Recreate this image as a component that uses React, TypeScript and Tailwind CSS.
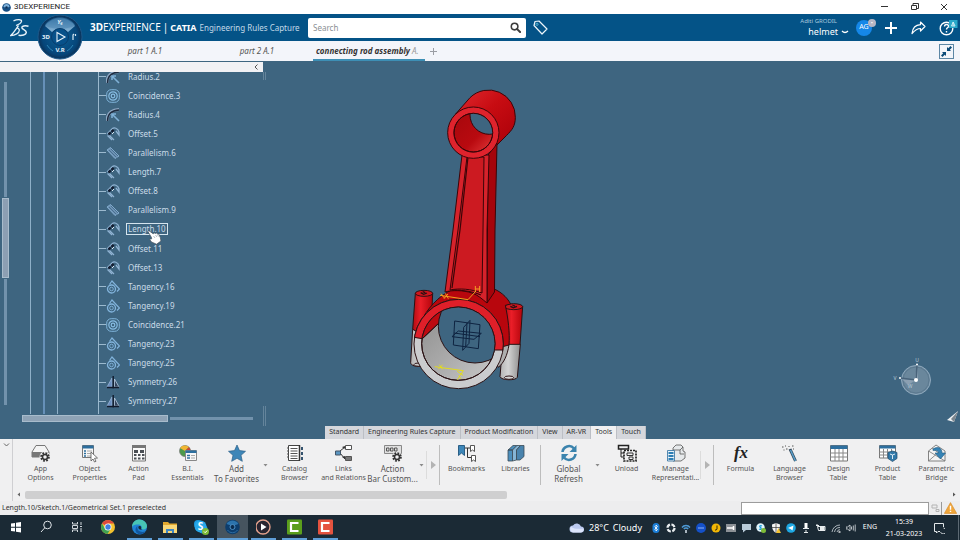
import type { ReactElement, ReactNode } from "react";
import clsx from "clsx";

type ConstraintKind = "radius" | "coincidence" | "offset" | "parallelism" | "tangency" | "symmetry";

type TreeNode = { label: string; kind: ConstraintKind; preselected?: boolean };

const TREE: TreeNode[] = [
  { label: "Radius.2", kind: "radius" },
  { label: "Coincidence.3", kind: "coincidence" },
  { label: "Radius.4", kind: "radius" },
  { label: "Offset.5", kind: "offset" },
  { label: "Parallelism.6", kind: "parallelism" },
  { label: "Length.7", kind: "offset" },
  { label: "Offset.8", kind: "offset" },
  { label: "Parallelism.9", kind: "parallelism" },
  { label: "Length.10", kind: "offset", preselected: true },
  { label: "Offset.11", kind: "offset" },
  { label: "Offset.13", kind: "offset" },
  { label: "Tangency.16", kind: "tangency" },
  { label: "Tangency.19", kind: "tangency" },
  { label: "Coincidence.21", kind: "coincidence" },
  { label: "Tangency.23", kind: "tangency" },
  { label: "Tangency.25", kind: "tangency" },
  { label: "Symmetry.26", kind: "symmetry" },
  { label: "Symmetry.27", kind: "symmetry" },
];

const SECTIONS = [
  "Standard",
  "Engineering Rules Capture",
  "Product Modification",
  "View",
  "AR-VR",
  "Tools",
  "Touch",
];

function ConstraintIcon({ kind }: { kind: ConstraintKind }): ReactElement {
  return (
    <svg viewBox="0 0 14 14" className="size-[14px] shrink-0" fill="none" aria-hidden="true">
      {kind === "radius" && (
        <>
          <path d="M1 13C1 6 5 2 13 1.500" stroke="#8fa9c4" strokeWidth="3" />
          <path d="M1.500 13C1.500 6.500 5.500 2.500 13 2" stroke="#1f2c40" strokeWidth="1.500" />
          <path d="M6 6l7 7M6 10V6h4" stroke="#7fb0d6" strokeWidth="1.600" />
        </>
      )}
      {kind === "coincidence" && (
        <>
          <rect x="0.700" y="0.700" width="12.600" height="12.600" rx="4.500" stroke="#7fb4da" />
          <circle cx="7" cy="7" r="4.200" stroke="#86bce2" strokeWidth="1.200" />
          <circle cx="7" cy="7" r="1.800" stroke="#86bce2" strokeWidth="1.200" />
        </>
      )}
      {kind === "offset" && (
        <>
          <path d="M1 7l5-5c2-2 6-1 7 3v3l-3-4" stroke="#8fb2d2" strokeWidth="1.300" />
          <path d="M3 8l5 5M1.500 8.500l4.500 4.500" stroke="#8fb2d2" strokeWidth="1.200" />
          <path d="M2.500 7.500l5.500-5" stroke="#141d30" strokeWidth="2.400" strokeDasharray="3 1" />
          <path d="M6 7l2-2" stroke="#dbe8f4" strokeWidth="1" />
        </>
      )}
      {kind === "parallelism" && (
        <>
          <path d="M1 4l8 8.500 4-2.500-8.500-8.500z" fill="#6d93b5" stroke="#86aed0" strokeWidth="0.900" />
          <path d="M3 4l7.500 7.500M5 3l7 7" stroke="#456b8b" strokeWidth="0.900" />
        </>
      )}
      {kind === "tangency" && (
        <>
          <circle cx="5.500" cy="9" r="4" stroke="#82b4dc" strokeWidth="1.300" />
          <circle cx="5.500" cy="9" r="1.800" stroke="#82b4dc" strokeWidth="0.900" />
          <path d="M3.500 4.500L6 1l7.500 8-2.500 2.500" stroke="#82b4dc" strokeWidth="1.200" />
        </>
      )}
      {kind === "symmetry" && (
        <>
          <path d="M6 3L1 12h5z" fill="#6b8fc0" stroke="#a2bbdd" strokeWidth="0.700" />
          <path d="M8.500 4l4.500 8H8.500z" fill="#35465f" stroke="#b9cbe0" strokeWidth="0.800" />
          <path d="M7.200 1v12.500M1 12.500h12" stroke="#111a2c" strokeWidth="1.400" />
        </>
      )}
    </svg>
  );
}

function TitleBar(): ReactElement {
  return (
    <div className="flex h-[14px] shrink-0 items-center bg-white pl-[2px] text-[#222]">
      <svg viewBox="0 0 10 10" className="size-[9px]" aria-hidden="true">
        <circle cx="5" cy="5" r="4.800" fill="#164e83" />
        <path d="M1.500 4a3.600 3.600 0 0 1 7 0L5 6z" fill="#7fb2db" />
        <circle cx="5" cy="5" r="1.400" fill="#0c3158" />
      </svg>
      <h1 className="ml-[3px] flex-1 font-[Roboto,sans-serif] text-[8px] leading-[10px]">
        3DEXPERIENCE
      </h1>
      <div className="flex gap-[16px] pr-[9px]">
        <button aria-label="Minimize">
          <svg viewBox="0 0 14 10" className="h-[10px] w-[14px]" stroke="#333" strokeWidth="1">
            <path d="M4 4.500h7" />
          </svg>
        </button>
        <button aria-label="Restore">
          <svg viewBox="0 0 14 10" className="h-[10px] w-[14px]" fill="none" stroke="#333">
            <path d="M4.500 3.500h5v4h-5zM6 3V1.500h5.500v5H10" />
          </svg>
        </button>
        <button aria-label="Close">
          <svg viewBox="0 0 14 10" className="h-[10px] w-[14px]" fill="none" stroke="#333">
            <path d="M4 2l6 6M10 2l-6 6" />
          </svg>
        </button>
      </div>
    </div>
  );
}

function Compass(): ReactElement {
  return (
    <button className="absolute left-[37px] top-0 z-10" aria-label="Compass">
      <svg viewBox="0 0 46 46" className="size-[46px]">
        <defs>
          <linearGradient id="top" x1="0" y1="0" x2="0" y2="1">
            <stop offset="0" stopColor="#2c6b9c" />
            <stop offset="1" stopColor="#8db9da" />
          </linearGradient>
          <radialGradient id="ball">
            <stop offset="0" stopColor="#0d6096" />
            <stop offset="0.800" stopColor="#06467a" />
            <stop offset="1" stopColor="#0b3157" />
          </radialGradient>
        </defs>
        <circle cx="23" cy="23" r="22" fill="url(#ball)" stroke="#1d5a8c" />
        <path d="M8 12A18.500 18.500 0 0 1 38 12L31 18A11 11 0 0 0 15 18z" fill="url(#top)" />
        <path d="M8 11C14 1 32 1 38 11 32 16 14 16 8 11z" fill="#4c87b4" opacity="0.550" />
        <path d="M10 31a16 16 0 0 0 6 6M36 31a16 16 0 0 1-6 6" stroke="#2d84b5" fill="none" />
        <circle cx="23" cy="23" r="8.500" fill="#07518a" stroke="#0a3e6d" />
        <path d="M20 18.500v9l8-4.500z" fill="none" stroke="#e8f2fa" strokeWidth="1.100" />
        <path d="M36 26v-5l1-1M38.500 22v-2" stroke="#d6e6f2" fill="none" strokeWidth="1.200" />
        <g
          fill="#e8f2fa"
          fontFamily="Noto Sans, sans-serif"
          fontSize="6"
          fontWeight="700"
          textAnchor="middle"
        >
          <text x="9" y="25">3D</text>
          <text x="23" y="10" fontStyle="italic">Y₆</text>
          <text x="23" y="38">V.R</text>
        </g>
      </svg>
    </button>
  );
}

function Header(): ReactElement {
  return (
    <header className="relative flex h-[27px] shrink-0 items-center bg-[#045387] text-white">
      <svg viewBox="0 0 20 18" className="ml-[10px] h-[18px] w-[20px]" fill="none" stroke="#e6f1f8">
        <path d="M3.500 1.800C7 .300 12 .200 11.500 2.300 11 4.300 8.500 5.500 6 6.500" strokeWidth="1.300" />
        <path
          d="M8.500 6.500C6 10 4 13.500 .800 16.500 5 16.500 9.500 14 9.300 11 9.200 9.500 8.300 9 6.500 8.800"
          strokeWidth="1.300"
        />
        <path
          d="M18.500 7.200C15 6.200 11.500 7 12 9c.500 1.600 4.500 2 4.300 4.500C16.100 16 12 16.800 8.500 16.300"
          strokeWidth="1.500"
        />
      </svg>
      <Compass />
      <p className="ml-[60px] flex w-[218px] items-baseline whitespace-nowrap font-[Noto_Sans,sans-serif] leading-4">
        <span className="text-[10px]">
          <b>3D</b>EXPERIENCE
        </span>
        <span className="mx-[2px] text-[10px]">|</span>
        <b className="text-[9px]">CATIA</b>
        <span className="ml-[3px] text-[8px] text-[#c3d9e8]">Engineering Rules Capture</span>
      </p>
      <form className="flex h-[20px] w-[218px] items-center rounded-xs bg-white pl-[5px] pr-[5px]">
        <input
          aria-label="Search"
          placeholder="Search"
          className="min-w-0 flex-1 font-[Noto_Sans,sans-serif] text-[8px] leading-3 text-gray-800 outline-none placeholder:text-[#8b8f94]"
        />
        <button type="button" aria-label="Run search">
          <svg viewBox="0 0 12 12" className="size-[11px]" fill="none" stroke="#3c3c3c">
            <circle cx="5" cy="5" r="3.600" strokeWidth="1.700" />
            <path d="M7.800 7.800L11 11" strokeWidth="2.200" strokeLinecap="round" />
          </svg>
        </button>
      </form>
      <button aria-label="Tags" className="ml-[7px]">
        <svg viewBox="0 0 15 15" className="size-[15px]" fill="none" stroke="#eef6fb">
          <path d="M1 5.500L2 1.500 6 1l8 8-5 5z" strokeWidth="1.200" strokeLinejoin="round" />
          <circle cx="4" cy="4.300" r="1.100" stroke="#59b7d6" />
        </svg>
      </button>
      <div className="flex-1" />
      <div className="mr-[7px] font-[Noto_Sans,sans-serif]">
        <p className="text-[6px] leading-[8px] text-[#a9c8de]">Aditi GRODIL</p>
        <button className="ml-2 flex items-center gap-[3px] text-[9px] leading-[14px]">
          helmet
          <svg viewBox="0 0 8 6" className="h-[6px] w-[8px]" fill="none" stroke="#fff">
            <path d="M1 2q3 3 6 0" strokeWidth="1.300" />
          </svg>
        </button>
      </div>
      <button className="relative flex size-4 items-center justify-center rounded-full bg-[#1587e8] font-[Noto_Sans,sans-serif] text-[7px]">
        AG
        <span className="absolute -right-1 -top-px flex size-2 items-center justify-center rounded-full bg-[#b5b6c4] text-[6px] leading-none">
          •
        </span>
      </button>
      <button aria-label="Add" className="ml-[12px]">
        <svg viewBox="0 0 14 14" className="size-[14px]" stroke="#fff" strokeWidth="2">
          <path d="M7 1v12M1 7h12" />
        </svg>
      </button>
      <button aria-label="Share" className="ml-[13px]">
        <svg viewBox="0 0 15 14" className="h-[14px] w-[15px]" fill="none" stroke="#fff">
          <path
            d="M9.500 1L14 5.500 9.500 10V7.500C6 7.500 4 9 1 12.500 1.500 7.500 4.500 4 9.500 3.700z"
            strokeWidth="1.200"
            strokeLinejoin="round"
          />
        </svg>
      </button>
      <button aria-label="Help" className="relative ml-[13px] mr-[2px]">
        <svg viewBox="0 0 19 16" className="h-4 w-[19px]" fill="none">
          <circle cx="7.500" cy="8.500" r="6.300" stroke="#fff" strokeWidth="1.400" />
          <path
            d="M5.500 6.500c0-3 4.500-2.500 4 0-.300 1.300-2 1.500-2 3M7.500 11v1.500"
            stroke="#fff"
            strokeWidth="1.400"
          />
          <rect x="10" y="0" width="8.500" height="8" fill="#2aa9c9" />
          <path d="M14.200 2v4M12.500 6l1.700-4 1.800 4z" stroke="#d8f2f8" strokeWidth="0.900" />
        </svg>
      </button>
    </header>
  );
}

function DocumentTabs(): ReactElement {
  return (
    <nav className="flex h-[20px] shrink-0 items-stretch bg-[#f3f5fa] pl-[89px] font-[Noto_Sans,sans-serif] text-[8px] italic text-[#555]">
      <button className="w-[112px]">part 1 A.1</button>
      <button className="w-[112px]">part 2 A.1</button>
      <button className="w-[112px] overflow-hidden whitespace-nowrap border-b-2 border-[#3d8fb5] pt-[2px] text-left font-bold text-[#333]">
        <span className="ml-[3px]">connecting rod assembly</span>{" "}
        <span className="font-normal text-[#999]">A.</span>
      </button>
      <button aria-label="New tab" className="ml-[5px]">
        <svg viewBox="0 0 7 7" className="size-[7px]" stroke="#9a9da3">
          <path d="M3.500 0v7M0 3.500h7" />
        </svg>
      </button>
      <div className="flex-1" />
      <button
        aria-label="Exit full screen"
        className="mr-[6px] flex size-[15px] items-center justify-center self-center border border-[#5d87a5]"
      >
        <svg viewBox="0 0 11 11" className="size-[11px]" fill="#0c4b78">
          <path d="M6 5V1l1.300 1.200L9.500 0 11 1.500 8.800 3.700 10 5zM5 6v4L3.700 8.800 1.500 11 0 9.500l2.200-2.200L1 6z" />
        </svg>
      </button>
    </nav>
  );
}

function HandCursor(): ReactElement {
  return (
    <svg viewBox="0 0 15 15" className="absolute left-[21px] top-[7px] z-10 size-[15px]" aria-hidden="true">
      <path
        d="M.800 1.300C2 .200 3 1.500 6.200 3.800l1-.900 1.200.6 1.200-.400 1 .9 1.200.1 1.500 3.500L14 11l-4.500 3.200L4.500 12 2.500 9.200l2.200-.400L4.500 7.500z"
        fill="#fff"
        stroke="#43505c"
        strokeWidth="0.700"
      />
      <path d="M6.500 6l1.500 2M8.500 5l1.500 2M10.500 4.800l1 1.700" stroke="#8894a0" strokeWidth="0.600" />
    </svg>
  );
}

function FeatureTree(): ReactElement {
  return (
    <aside className="flex w-[266px] shrink-0 flex-col">
      <div className="mt-px flex h-[10px] shrink-0">
        <div className="flex w-[263px] items-center justify-end bg-[#f1f1f4] pr-1">
          <button aria-label="Collapse tree">
            <svg viewBox="0 0 6 8" className="h-2 w-[6px]" fill="none" stroke="#555">
              <path d="M4.500 1.500L2 4l2.500 2.500" />
            </svg>
          </button>
        </div>
      </div>
      <div className="flex min-h-0 flex-1">
        <div className="flex w-[30px] shrink-0 flex-col items-center pb-[9px] pr-[20px] pt-[10px]">
          <div className="w-[3px] flex-[115] bg-[#7292ac]" />
          <div className="my-px w-[7px] flex-[78] border border-[#a8bccc] bg-[#8c9fb3]" />
          <div className="w-[3px] flex-[126] bg-[#7292ac]" />
        </div>
        <div className="w-[13px] shrink-0 border-l border-[#8fb0c8]" />
        <div className="w-[14px] shrink-0 border-l-2 border-[#6690b8]" />
        <div className="w-[41px] shrink-0 border-l border-[#8fb0c8]" />
        <div className="min-w-0 flex-1 overflow-hidden border-l border-[#9bb9ce]">
          <ul className="-mt-[5px] grid h-[calc(100%+2px)] auto-rows-fr">
            {TREE.map((node) => (
              <li key={node.label} className="flex min-h-0 items-center">
                <span className="h-px w-[7px] bg-[#9bb9ce]" />
                <ConstraintIcon kind={node.kind} />
                <div className="relative ml-[6px] flex">
                  <button
                    className={clsx(
                      "border px-px font-[Noto_Sans,sans-serif] text-[8px] leading-[10px] text-[#cbdce8]",
                      node.preselected ? "border-[#d5e4ee]" : "border-transparent",
                    )}
                  >
                    {node.label}
                  </button>
                  {node.preselected ? <HandCursor /> : null}
                </div>
              </li>
            ))}
          </ul>
        </div>
        <div className="flex w-[3px] shrink-0 flex-col justify-between">
          <span className="h-2 border-x border-[#64849b]" />
          <span className="h-2 border-x border-[#64849b]" />
        </div>
      </div>
      <div className="flex h-[12px] shrink-0 pl-[22px]">
        <div className="mt-px h-[7px] w-[146px] border border-[#a8bccc] bg-[#8fa3b6]" />
        <div className="ml-[2px] mt-[3px] h-[3px] w-[83px] bg-[#7292ac]" />
        <span className="ml-auto w-[3px] border-x border-[#64849b]" />
      </div>
    </aside>
  );
}

// Connecting rod, view compass and resize corner, in window coordinates.
function ModelView(): ReactElement {
  return (
    <div className="relative min-w-0 flex-1">
      <svg viewBox="266 61 694 365" className="absolute inset-0 size-full" role="img" aria-label="Connecting rod">
        <defs>
          <linearGradient id="barrel" x1="0" y1="0" x2="1" y2="1">
            <stop offset="0" stopColor="#df2a30" />
            <stop offset="0.450" stopColor="#c80c12" />
            <stop offset="1" stopColor="#a90009" />
          </linearGradient>
          <linearGradient id="bore" x1="0" y1="0" x2="1" y2="1">
            <stop offset="0" stopColor="#a6070c" />
            <stop offset="0.600" stopColor="#b90a10" />
            <stop offset="1" stopColor="#e23a3a" />
          </linearGradient>
          <linearGradient id="boltRed" x1="0" y1="0" x2="1" y2="0">
            <stop offset="0" stopColor="#b00c12" />
            <stop offset="0.400" stopColor="#ea1e28" />
            <stop offset="1" stopColor="#b3040b" />
          </linearGradient>
          <linearGradient id="boltGrey" x1="0" y1="0" x2="1" y2="0">
            <stop offset="0" stopColor="#b4b4b4" />
            <stop offset="0.400" stopColor="#d4d4d4" />
            <stop offset="1" stopColor="#8f8f8f" />
          </linearGradient>
          <linearGradient id="cap" x1="0" y1="0" x2="1" y2="1">
            <stop offset="0" stopColor="#8d8d8d" />
            <stop offset="0.500" stopColor="#a9a9a9" />
            <stop offset="1" stopColor="#c9c9c9" />
          </linearGradient>
          <clipPath id="smallBore">
            <circle cx="250" cy="158" r="58" />
          </clipPath>
          <clipPath id="bigBore">
            <circle cx="205" cy="341" r="110" />
          </clipPath>
          <clipPath id="upperHalf">
            <path d="M40 160H360V361H315L97 326 40 319z" />
          </clipPath>
        </defs>

        {/* small end, back barrel */}
        <g transform="translate(390 80) scale(0.33333)" stroke="#3a0508" strokeWidth="3">
          <path
            d="M196 103L240 53A80 80 0 0 1 376 112C376 138 366 150 350 166L318 198z"
            fill="url(#barrel)"
          />
        </g>

        {/* big end, bolts and ring */}
        <g transform="translate(390 230) scale(0.33333)" stroke="#2a1113" strokeWidth="3">
          <path d="M68 298L62 398C62 406 78 412 98 408L128 300z" fill="url(#boltGrey)" />
          <path d="M76 190L68 298 90 310 124 280 128 190z" fill="url(#boltRed)" />
          <ellipse cx="102" cy="190" rx="26" ry="9" fill="#cf151c" />
          <path d="M92 188l9 5 10-4M98 185l8 3" fill="none" strokeWidth="4" />
          <ellipse cx="86" cy="404" rx="14" ry="5" fill="#c9c9c9" />

          <path d="M344 230L342 345 390 345 398 230z" fill="url(#boltRed)" />
          <path d="M338 343L330 440C334 452 378 452 382 442L391 343z" fill="url(#boltGrey)" />
          <ellipse cx="371" cy="230" rx="27" ry="9" fill="#cf151c" />
          <path d="M361 229l9 4 11-4M367 225l8 3" fill="none" strokeWidth="4" />
          <ellipse cx="357" cy="443" rx="14" ry="5" fill="#d5d5d5" />

          <path
            d="M100 262C120 225 160 185 205 172L300 172C330 182 350 200 362 222L346 226C354 262 360 310 357 345L340 362 206 342z"
            fill="#b8060d"
          />
          <path d="M357 345C352 376 342 398 325 412L310 380 338 350z" fill="#aeaeae" />
          <circle cx="206" cy="342" r="134" fill="#cbccce" />
          <circle cx="206" cy="342" r="134" fill="#df1f29" clipPath="url(#upperHalf)" />
          <path d="M72 322L97 326M315 360L340 360" />
          <circle cx="205" cy="341" r="110" fill="url(#cap)" />
          <g clipPath="url(#bigBore)">
            <path d="M90 327L97 326 146 280 200 225 90 225z" fill="#bc0910" />
            <path d="M146 280L240 225H320V360H310z" fill="#bc0910" />
            <circle cx="255" cy="289" r="110" fill="#3e6580" />
            <path d="M97 326L146 280" />
          </g>
          <circle cx="205" cy="341" r="110" fill="none" />
        </g>

        {/* shank */}
        <g stroke="#3a0508" strokeWidth="1">
          <path d="M488 155L497 143 495 230 494.500 292 487 303z" fill="#a5040b" />
          <path
            d="M462 155L453 230 445 292C452 290 463 290 472 293 478 295 482 299 487 303L487 230 489 155z"
            fill="#d6222b"
          />
          <path d="M467 157L458 230 450 290C460 288 471 289 482 293L483 230 484 157z" fill="#cc1a21" />
          <path d="M468 157L460 230 452 288" fill="none" strokeWidth="1.200" />
          <path d="M452 290C460 290 472 291 481 295" fill="none" strokeWidth="1.200" />
        </g>

        {/* small end, front ring */}
        <g transform="translate(390 80) scale(0.33333)" stroke="#3a0508" strokeWidth="3">
          <circle cx="250" cy="158" r="77" fill="#df232d" />
          <circle cx="250" cy="158" r="58" fill="url(#bore)" />
          <circle cx="298" cy="105" r="58" fill="#3e6580" clipPath="url(#smallBore)" />
          <circle cx="250" cy="158" r="58" fill="none" />
        </g>

        {/* sketch planes and axes */}
        <g transform="translate(390 230) scale(0.33333)" fill="none" strokeWidth="3">
          <path
            d="M194 273L270 284 265 356 190 345zM240 271L221 292 218 361 237 340zM186 320L205 303 274 310 252 328zM192 309L270 320M231 279L227 350"
            stroke="#0e2340"
          />
          <path d="M150 196L234 209 258 183M166 190L175 206M162 206L174 192M153 191L164 205" stroke="#f0a21e" />
          <path d="M256 168V186M269 168V186M256 177H269" stroke="#f3a024" />
          <path d="M134 410L220 422 202 449M148 404L157 418M145 417L158 405M202 424L219 436M206 436L213 446" stroke="#e3dc1c" />
        </g>

        {/* view compass */}
        <circle cx="916" cy="380" r="14.500" fill="#6a879c" stroke="#8fa9bd" />
        <circle cx="916" cy="380" r="13" fill="none" stroke="#54738a" strokeWidth="0.700" />
        <path d="M916 380L902 379 908 385zM914.500 380L917 366 918 380z" fill="#8ba0b2" />
        <path d="M900 378L916 380 917 365" fill="none" stroke="#48637a" strokeWidth="1.500" />
        <g fill="#fff">
          <circle cx="916" cy="380" r="2" />
          <circle cx="900" cy="378" r="1" />
          <circle cx="917" cy="364.500" r="1" />
        </g>
        <g fill="#b9cad8" fontFamily="Noto Sans, sans-serif" fontSize="5" textAnchor="middle">
          <text x="917" y="362">U</text>
          <text x="895" y="380">V</text>
          <text x="910" y="388">W</text>
        </g>
        <path d="M947 420L958 411 954 422z" fill="#eef1f3" />
        <path d="M951 419L958 411 954 422z" fill="#7b858d" />
      </svg>
    </div>
  );
}

function SectionBar(): ReactElement {
  return (
    <div className="flex h-[13px] shrink-0 justify-center bg-[#3e6580] pl-[11px] font-[Noto_Sans,sans-serif] text-[7px] text-[#333]">
      {SECTIONS.map((section) => (
        <button
          key={section}
          className={clsx(
            "whitespace-nowrap border-r border-[#bcbfc5] px-1",
            section === "Tools" ? "bg-[#f0f0f1]" : "bg-[#d5d7dc]",
          )}
        >
          {section}
        </button>
      ))}
    </div>
  );
}

type ToolProps = { lines: string[]; large?: boolean; children: ReactNode };

function Tool({ lines, large = false, children }: ToolProps): ReactElement {
  return (
    <button className="flex w-[49px] shrink-0 flex-col items-center pt-[5px]">
      <svg viewBox="0 0 20 18" className="h-[18px] w-[20px] overflow-visible" fill="none" aria-hidden="true">
        {children}
      </svg>
      <span
        className={clsx(
          "mt-[2px] text-center whitespace-nowrap text-[#555]",
          large ? "text-[8px] leading-[10px]" : "text-[7px] leading-[9px]",
        )}
      >
        {lines.map((line) => (
          <span key={line} className="block">
            {line}
          </span>
        ))}
      </span>
    </button>
  );
}

function DropArrow(): ReactElement {
  return (
    <button aria-label="More" className="w-[9px] shrink-0">
      <svg viewBox="0 0 9 6" className="h-[6px] w-[9px]" fill="#8a8a8a">
        <path d="M2.500 2h4l-2 2.500z" />
      </svg>
    </button>
  );
}

function NextGroup(): ReactElement {
  return (
    <div className="mr-[2px] mt-[6px] flex h-[40px] w-[14px] shrink-0 items-center border-r border-[#bdbdbd]">
      <button aria-label="Expand group" className="flex h-7 items-center border-l border-[#dcdcdc] pl-[4px]">
        <svg viewBox="0 0 6 8" className="h-2 w-[6px]" fill="#b4b4b4">
          <path d="M0 0l5 4-5 4z" />
        </svg>
      </button>
    </div>
  );
}

function Gear({ x, y }: { x: number; y: number }): ReactElement {
  return (
    <g transform={`translate(${x} ${y})`} stroke="#333">
      <circle r="3.800" strokeWidth="2" strokeDasharray="1.700 1.280" />
      <circle r="2.500" strokeWidth="1.500" />
    </g>
  );
}

function Toolbar(): ReactElement {
  return (
    <section className="flex h-[62px] shrink-0 overflow-hidden bg-[#f0f0f1] font-[Noto_Sans,sans-serif]">
      <div className="w-[13px] shrink-0 border-r border-[#cfcfd2] pl-[3px] pt-[3px]">
        <button aria-label="Hide action bar" className="block">
          <svg viewBox="0 0 7 6" className="h-[6px] w-[7px]" fill="none" stroke="#666">
            <path d="M1 1.500l2.500 2.500L6 1.500" />
          </svg>
        </button>
      </div>
      <div className="min-w-0 flex-1">
        <div className="flex h-[51px] overflow-hidden pl-[3px]">
          <Tool lines={["App", "Options"]}>
            <path d="M1 8L5 1.500h9L18 8v5H1z" fill="#f4f4f4" stroke="#777" />
            <path d="M1 8h17v5H1z" fill="#777" />
            <circle cx="14" cy="13" r="5.500" fill="#f0f0f1" />
            <Gear x={14} y={13} />
          </Tool>
          <Tool lines={["Object", "Properties"]}>
            <path d="M2.500 1.500h11v12h-11z" fill="#f7f7f7" stroke="#777" />
            <path d="M2.500 1.500h11v3h-11z" fill="#2d6f9f" />
            <path d="M4 7h2M4 9.500h2M4 12h2" stroke="#2d6f9f" strokeWidth="1.500" />
            <path d="M7 7h5M7 9.500h5M7 12h4" stroke="#aaa" />
            <path d="M11 8l6.500 6-3 .3 1.500 3-1.500.7-1.500-3-2 2z" fill="#fff" stroke="#555" strokeWidth="0.800" />
          </Tool>
          <Tool lines={["Action", "Pad"]}>
            <path d="M3.500 1.500h13v15.500h-13z" fill="#fafafa" stroke="#777" />
            <path d="M3 1h14v3H3z" fill="#777" />
            <path d="M5 6h4v3H5zM11 6h4v3h-4zM5 10h2.500v2H5zM9 10h2.500v2H9zM13 10h2.500v2H13zM5 13.500h2.500v2H5zM9 13.500h2.500v2H9zM13 13.500h2.500v2H13z" fill="#4a4f55" />
          </Tool>
          <Tool lines={["B.I.", "Essentials"]}>
            <circle cx="7" cy="7" r="5.500" fill="#4c9a4a" stroke="#777" strokeWidth="0.700" />
            <path d="M7 7L2 4A6 6 0 0 1 11 3z" fill="#f2b632" />
            <path d="M7 7l4-4 2 4z" fill="#ce4636" />
            <path d="M7.500 6.500h11v10h-11z" fill="#f7f7f7" stroke="#888" />
            <path d="M7.500 6.500h11v2.500h-11z" fill="#2d6f9f" />
            <path d="M9 11.500h3M9 14h3" stroke="#2d6f9f" strokeWidth="1.500" />
            <path d="M13 11.500h4M13 14h4" stroke="#aaa" />
          </Tool>
          <Tool lines={["Add", "To Favorites"]} large>
            <path
              d="M10 1l2.500 5.600 6 .700-4.500 4 1.300 6L10 14.300 4.700 17.300l1.300-6-4.500-4 6-.700z"
              fill="#3d86b8"
              stroke="#2b5f86"
              strokeWidth="0.700"
            />
          </Tool>
          <DropArrow />
          <Tool lines={["Catalog", "Browser"]}>
            <path d="M3.500 1.500h11v15h-11z" fill="#fff" stroke="#444" />
            <path d="M14.500 1v16" stroke="#333" strokeWidth="1.500" />
            <path d="M5.500 4.500h7M5.500 7h7M5.500 9.500h7M5.500 12h7M5.500 14.500h7" stroke="#555" />
            <path d="M2 4h2M2 7h2M2 10h2M2 13h2" stroke="#555" />
            <path d="M16 3h2v3h-2zM16 8h2v3h-2zM16 13h2v3h-2z" fill="#34536e" />
          </Tool>
          <Tool lines={["Links", "and Relations"]}>
            <path d="M6 7l5-4h7M6 9l5 6h7" stroke="#333" strokeWidth="1" />
            <path d="M1.500 7h5v4h-5z" fill="#5b96c2" stroke="#456" />
            <path d="M11.500 1.500h6v4h-6z" fill="#fff" stroke="#555" />
            <path d="M11.500 12.500h6v4h-6z" fill="#777" stroke="#555" />
            <path d="M8 3l3-1-.500 3zM8 13l3 2V12z" fill="#333" />
          </Tool>
          <Tool lines={["Action", "Bar Custom..."]} large>
            <path d="M1.500 1.500h17v8h-17z" fill="#e0e0e0" stroke="#888" />
            <path d="M3.500 4h2.500v3H3.500zM7.500 4H10v3H7.500zM11.500 4H14v3h-2.500z" stroke="#555" />
            <circle cx="14" cy="13" r="5" fill="#f0f0f1" />
            <Gear x={14} y={13} />
          </Tool>
          <DropArrow />
          <NextGroup />
          <Tool lines={["Bookmarks"]}>
            <path d="M1.500 1.500h6v10l-3-2.500-3 2.500z" fill="#3d86b8" stroke="#2b5f86" />
            <path d="M8 4h5M10.500 4v9.500h4" stroke="#333" />
            <path d="M13.500 1.500h4v6l-2-1.500-2 1.500zM14.500 11.500h4v6l-2-1.500-2 1.500z" fill="#fff" stroke="#555" />
          </Tool>
          <Tool lines={["Libraries"]}>
            <path d="M2 6l5-4.500h4L6.500 6zM2 6h4.500v11H2z" fill="#4d8fbc" stroke="#3b4a56" strokeWidth="0.800" />
            <path d="M6.500 6L11 1.500h3.500L10.500 6v10l-4 1z" fill="#86b5d5" stroke="#3b4a56" strokeWidth="0.800" />
            <path d="M10.500 6L14.500 1.500H18v11L14 16h-3.500z" fill="#4983ad" stroke="#3b4a56" strokeWidth="0.800" />
          </Tool>
          <div className="mt-[6px] h-[40px] w-[4px] shrink-0 border-l border-[#bdbdbd]" />
          <Tool lines={["Global", "Refresh"]} large>
            <path d="M3.500 8A6.500 6.500 0 0 1 15 4.500M16.500 10A6.500 6.500 0 0 1 5 13.500" stroke="#3b83ad" strokeWidth="2.600" />
            <path d="M17.500 1v7h-7zM2.500 17v-7h7z" fill="#3b83ad" />
          </Tool>
          <DropArrow />
          <Tool lines={["Unload"]}>
            <path d="M1.500 1.500h10v3.500h-10z" stroke="#222" strokeWidth="1.500" />
            <path d="M4 5v8h3M4 9h3" stroke="#222" />
            <path d="M7 6.500h12V17H7z" stroke="#222" strokeWidth="1.700" strokeDasharray="2 1" />
            <path d="M10 9h6v2.500h-6zM12 13h4v2.500h-4z" stroke="#333" />
          </Tool>
          <Tool lines={["Manage", "Representati..."]}>
            <path d="M7 6V4l3-3h5l2 2v4l2 1v6l-4 3H7z" fill="#e6e9eb" stroke="#555" strokeWidth="0.800" />
            <path d="M7 6h7v4h4M14 6l3-3" stroke="#555" strokeWidth="0.800" />
            <path d="M1.500 6.500h7v10.500h-7z" fill="#e8f1f7" stroke="#2d6f9f" strokeWidth="0.800" />
            <path d="M2.500 9h5M2.500 12h5M2.500 15h5" stroke="#2d7fb5" strokeWidth="2" />
          </Tool>
          <NextGroup />
          <Tool lines={["Formula"]}>
            <text x="10" y="14" textAnchor="middle" fill="#222" fontSize="17" fontWeight="700" fontStyle="italic" fontFamily="Liberation Serif, serif">
              fx
            </text>
          </Tool>
          <Tool lines={["Language", "Browser"]}>
            <path d="M10 5l5.500 12" stroke="#33485a" strokeWidth="3" />
            <path d="M10.500 6l5 11" stroke="#5aa0cc" strokeWidth="1.500" />
            <path d="M2 3h1.500M5 2h1M6 5h1.500M8.500 2.500h1M12 2h1.500M3.500 6h1M13 5h1" stroke="#555" strokeWidth="1.200" />
          </Tool>
          <Tool lines={["Design", "Table"]}>
            <path d="M1.500 1.500h17V17h-17z" fill="#fff" stroke="#777" />
            <path d="M1.500 1.500h17v3.500h-17z" fill="#2d6f9f" />
            <path d="M1.500 9h17M1.500 13h17M6 5v12M10 5v12M14 5v12" stroke="#888" />
          </Tool>
          <Tool lines={["Product", "Table"]}>
            <path d="M1.500 1.500h16V14h-16z" fill="#fff" stroke="#777" />
            <path d="M1.500 1.500h16v3h-16z" fill="#2d6f9f" />
            <path d="M1.500 8h16M1.500 11h16M5.500 5v9M9.500 5v9M13.500 5v9" stroke="#888" />
            <path d="M10 8.500l4.500-1.500 4.500 1.500v6L14.500 17.500 10 14.500z" fill="#3179a9" stroke="#1f4c6d" strokeWidth="0.700" />
            <path d="M12 10l2.500 1 2.500-1M14.500 11v4" stroke="#dcebf5" />
          </Tool>
          <Tool lines={["Parametric", "Bridge"]}>
            <path d="M1.500 7L9 1l9 6v10h-16.500z" fill="#f4f4f4" stroke="#666" strokeWidth="0.800" />
            <path d="M1.500 7l16.500 10M1.500 17L9 10.500M5 4l8 6" stroke="#777" strokeWidth="0.800" />
            <path d="M6 5c5-3 9-1 9 4h3.500L13.500 15 8 9h3.500c0-2-2-3-5.500-2.500z" fill="#3583b5" stroke="#215a80" strokeWidth="0.600" />
          </Tool>
        </div>
        <div className="flex h-[9px] items-center">
          <button aria-label="Scroll left" className="w-[12px] pl-[4px]">
            <svg viewBox="0 0 4 5" className="h-[5px] w-[4px]" fill="#666">
              <path d="M3 .500v4L.500 2.500z" />
            </svg>
          </button>
          <div className="min-w-0 flex-1">
            <div className="h-2 w-[52%] rounded-xs bg-[#cfcfd0]" />
          </div>
          <button aria-label="Scroll right" className="pr-[4px]">
            <svg viewBox="0 0 4 5" className="h-[5px] w-[4px]" fill="#555">
              <path d="M1 .500v4L3.500 2.500z" />
            </svg>
          </button>
        </div>
      </div>
    </section>
  );
}

function StatusBar(): ReactElement {
  return (
    <div className="flex h-[14px] shrink-0 items-center bg-[#ededee] pl-[2px] font-[Noto_Sans,sans-serif] text-[7px] text-[#333]">
      <p className="flex-1 whitespace-nowrap">Length.10/Sketch.1/Geometrical Set.1 preselected</p>
      <input aria-label="Power input" className="h-[13px] w-[188px] border border-[#9c9c9c] bg-white px-1 outline-none" />
      <button aria-label="Command history" className="ml-px flex h-[13px] w-[12px] items-center justify-center border-r border-[#999]">
        <svg viewBox="0 0 9 9" className="size-[9px]" fill="none" stroke="#b3b3b3">
          <path d="M1 1h5v3H1zM5 5.500h3v2H5z" />
        </svg>
      </button>
      <button aria-label="Warnings" className="ml-[2px] mr-[3px]">
        <svg viewBox="0 0 12 11" className="h-[12px] w-[13px]">
          <path d="M6 .500L11.700 10.500H.300z" fill="#efa63b" stroke="#d98b28" strokeWidth="0.600" />
          <path d="M6 3.500v3.500M6 8v1.300" stroke="#fff" strokeWidth="1.300" />
        </svg>
      </button>
    </div>
  );
}

type TaskButtonProps = { label: string; running?: boolean; active?: boolean; children: ReactNode };

function TaskButton({ label, running = false, active = false, children }: TaskButtonProps): ReactElement {
  return (
    <button
      aria-label={label}
      className={clsx("flex w-[31px] shrink-0 flex-col items-center", active && "bg-[#46545f]")}
    >
      <svg viewBox="0 0 16 16" className="mt-[4px] size-4" fill="none" aria-hidden="true">
        {children}
      </svg>
      <span
        className={clsx(
          "mt-auto h-[2px]",
          active ? "w-full" : "w-[25px]",
          running ? "bg-[#5f9fd8]" : "bg-transparent",
        )}
      />
    </button>
  );
}

function TrayIcon({ label, children }: { label: string; children: ReactNode }): ReactElement {
  return (
    <button aria-label={label} className="flex w-[15px] items-center justify-center">
      <svg viewBox="0 0 10 10" className="size-[10px]" fill="none" aria-hidden="true">
        {children}
      </svg>
    </button>
  );
}

function Taskbar(): ReactElement {
  return (
    <footer className="flex h-[25px] shrink-0 items-stretch bg-[#1b2a35] font-[Noto_Sans,sans-serif] text-white">
      <TaskButton label="Start">
        <path d="M3 4.500l4-.600v3.900H3zM8 3.700l5-.700v4.800H8zM3 8.700h4v3.900L3 12zM8 8.700h5v4.800l-5-.700z" fill="#fff" />
      </TaskButton>
      <TaskButton label="Search Windows">
        <circle cx="8.500" cy="6" r="3.800" stroke="#dfe4e8" />
        <path d="M5.800 8.800L2 13" stroke="#dfe4e8" />
      </TaskButton>
      <TaskButton label="Task view">
        <path d="M2.500 3v2h5V3M2.500 6.500h5v3h-5zM2.500 13v-2h5v2M11 3v3M11 9v4M10 7.500h2" stroke="#cfd5da" />
      </TaskButton>
      <TaskButton label="Chrome">
        <circle cx="7" cy="8" r="7" fill="#f3c22e" />
        <path d="M7 8L1 4.500A7 7 0 0 1 13 4.500H7z" fill="#dd4a3c" />
        <path d="M1 4.500A7 7 0 0 0 6.500 15L10 9.500 4 9.800z" fill="#3fa253" />
        <circle cx="7" cy="8" r="3.500" fill="#fff" />
        <circle cx="7" cy="8" r="2.700" fill="#3f7fe0" />
      </TaskButton>
      <TaskButton label="Edge" running>
        <circle cx="7.500" cy="8" r="7.500" fill="#2084d6" />
        <path d="M0 8C0 3 3.500 .500 7.500 .500s7.500 3 7.500 6.500c0 3-3 4-5.500 3 1-3-1-4.500-3.500-4.500S1 6 0 8z" fill="#48c6b4" />
        <path d="M5.500 7c-1 4 2 7 8 5.500-3 4.500-10 3-10-1.500C3.500 9 4.500 7.500 5.500 7z" fill="#12579f" />
        <path d="M6.500 7.500c1-1 3-.500 2.700 1.500-.200 1 .300 1.500 1 1.800-3 .5-4.500-1.800-3.700-3.300z" fill="#1b2a35" />
      </TaskButton>
      <TaskButton label="File Explorer" running>
        <path d="M0 3h5l1.500 1.500H14V14H0z" fill="#e3a92f" />
        <path d="M0 6h14v8H0z" fill="#f9d878" />
        <path d="M3 10h8v4H9v-2H5v2H3z" fill="#3f87c4" />
      </TaskButton>
      <TaskButton label="Skype" running>
        <circle cx="4" cy="5" r="4" fill="#1b9be0" />
        <circle cx="9" cy="10" r="4.500" fill="#1b9be0" />
        <circle cx="6.500" cy="7.500" r="6" fill="#28a8ea" />
        <text x="6.500" y="11" textAnchor="middle" fill="#fff" fontSize="10" fontWeight="700" fontFamily="Noto Sans, sans-serif">
          S
        </text>
        <circle cx="11.500" cy="12.500" r="3.500" fill="#7dbb38" />
        <path d="M10 12.500l1.200 1.200 2-2.200" stroke="#fff" />
      </TaskButton>
      <TaskButton label="3DEXPERIENCE" running active>
        <circle cx="7.500" cy="8" r="7.300" fill="#0d3d6c" />
        <path d="M1.500 5a7 7 0 0 1 12 0L7.500 7z" fill="#2c74ad" />
        <circle cx="7.500" cy="8" r="2.500" fill="#0b2c4e" stroke="#4d8fc4" />
        <path d="M2.500 11a6 6 0 0 0 10 0" stroke="#2d6da3" />
      </TaskButton>
      <TaskButton label="Media Player" running>
        <circle cx="7" cy="8" r="7" stroke="#e6a08c" strokeWidth="1.400" />
        <circle cx="7" cy="8" r="5.800" fill="#2b2430" />
        <path d="M5 4.500v7L10.500 8z" fill="#fff" />
      </TaskButton>
      <TaskButton label="Camtasia" running>
        <rect x="0" y="0.500" width="15" height="15" rx="1" fill="#5b9f1c" />
        <path d="M11.500 4H4v8h7.500" stroke="#fff" strokeWidth="2.200" />
      </TaskButton>
      <TaskButton label="Camtasia Recorder" running>
        <rect x="0" y="0.500" width="15" height="15" rx="1" fill="#e5533f" />
        <path d="M11.500 4H4v8h7.500" stroke="#fff" strokeWidth="2.200" />
      </TaskButton>
      <div className="flex-1" />
      <button className="mr-[6px] flex items-center gap-1 whitespace-nowrap text-[9px]">
        <svg viewBox="0 0 16 11" className="h-[11px] w-4">
          <path d="M4 10.500a3.500 3.500 0 0 1 0-7A4.500 4.500 0 0 1 12 4.500a3 3 0 0 1 0 6z" fill="#b9c8ee" />
          <path d="M4 10.500A3.500 3.500 0 0 1 2 5c3 2 8 2 12.500 1.500a3 3 0 0 1-2.500 4z" fill="#dbe4fa" />
        </svg>
        <span>28°C</span>
        <span>Cloudy</span>
      </button>
      <TrayIcon label="Bluetooth">
        <rect x="1.500" width="7" height="10" rx="3.500" fill="#1c7fd8" />
        <path d="M3.500 3.500l3 3L5 8V2l1.500 1.500-3 3" stroke="#fff" strokeWidth="0.800" />
      </TrayIcon>
      <TrayIcon label="Sync">
        <circle cx="5" cy="5" r="3.500" stroke="#e8ecee" strokeWidth="2.200" strokeDasharray="4 1.500" />
      </TrayIcon>
      <TrayIcon label="Hotspot">
        <path d="M1 4.500a5 5 0 0 1 8 0M2.800 6a3 3 0 0 1 4.400 0" stroke="#4d9ad6" strokeWidth="1.400" />
        <path d="M5 7v3" stroke="#d8e4ee" strokeWidth="1.500" />
      </TrayIcon>
      <TrayIcon label="Intel">
        <circle cx="5" cy="5" r="5" fill="#1450c8" />
        <path d="M2 5h6" stroke="#8db2f5" />
      </TrayIcon>
      <TrayIcon label="Jabra">
        <circle cx="5" cy="5" r="4.500" fill="#f2b705" />
        <path d="M6 2.500v3.500Q5.500 7.500 4 7" stroke="#332a08" />
      </TrayIcon>
      <TrayIcon label="License key">
        <path d="M0 1h10v8H0z" fill="#8c9196" />
        <path d="M1 5h6M7.500 3v4" stroke="#fff" strokeWidth="1.500" />
      </TrayIcon>
      <TrayIcon label="Messages">
        <path d="M1 1h9v6H5L2 9.500V7H1z" fill="#b9cbd8" />
      </TrayIcon>
      <TrayIcon label="Skype status">
        <circle cx="4.500" cy="4.500" r="4.200" fill="#e0f3fb" />
        <path d="M6 3C4 2 3 3.500 4.500 4.500S5 7 3 6" stroke="#1a9ad8" strokeWidth="1.200" />
        <circle cx="7.500" cy="7.500" r="2.500" fill="#7dbb38" />
      </TrayIcon>
      <TrayIcon label="Security">
        <path d="M5 0l4 1.500C9 6 8 8 5 10 2 8 1 6 1 1.500z" fill="#f3f3f3" />
        <path d="M5 0v10M1 4.500h8" stroke="#333" strokeWidth="0.700" />
        <path d="M7.500 5L10 10H5z" fill="#f2c230" />
      </TrayIcon>
      <TrayIcon label="Messenger">
        <circle cx="5" cy="5" r="4.800" fill="#1da7e2" />
        <path d="M2 5l5.500-2.500L6.500 7.500 4.500 6z" fill="#fff" />
      </TrayIcon>
      <TrayIcon label="Microphone">
        <path d="M3.500 0h3v6h-3z" fill="#fff" />
        <path d="M2 5.500h6M5 7v2.500M3 9.500h4" stroke="#e8ecee" />
      </TrayIcon>
      <TrayIcon label="Battery">
        <path d="M1.500 3.500h7.500v4H2.500zM0 2.500h3M1 1v2" stroke="#e8ecee" />
        <path d="M4 4h4.500v3H4z" fill="#e8ecee" />
      </TrayIcon>
      <TrayIcon label="Network">
        <path d="M1 9a8 8 0 0 1 8-7M3.500 9A5.500 5.500 0 0 1 9 4.500M6 9a3 3 0 0 1 3-2.300" stroke="#aab3ba" />
        <path d="M7.500 9h2" stroke="#fff" strokeWidth="1.300" />
      </TrayIcon>
      <TrayIcon label="Volume">
        <path d="M0 4h1.500L4 2v6L1.500 6H0zM5.500 3.500v3M7.300 2.500v5M9.200 1.500v7" stroke="#dfe4e8" strokeWidth="0.800" />
      </TrayIcon>
      <button className="w-[24px] text-center text-[7px]">ENG</button>
      <button className="mr-[7px] w-[44px] text-center text-[7px] leading-[12px]">
        <span className="block">15:39</span>
        <span className="block">21-03-2023</span>
      </button>
      <button aria-label="Notifications" className="mr-[13px]">
        <svg viewBox="0 0 12 12" className="size-[12px]" fill="none" stroke="#e4e8eb">
          <path d="M7 9.500H5L3.500 11V9.500H1.500V1.500h9V5" />
          <path d="M10.500 6a3 3 0 1 1-3 4" strokeWidth="0.900" />
        </svg>
      </button>
      <span className="mr-px w-px bg-[#5c6973]" />
    </footer>
  );
}

export default function App(): ReactElement {
  return (
    <div className="flex h-screen flex-col overflow-hidden">
      <TitleBar />
      <Header />
      <DocumentTabs />
      <main className="flex min-h-0 flex-1 bg-[#3e6580]">
        <FeatureTree />
        <ModelView />
      </main>
      <SectionBar />
      <Toolbar />
      <StatusBar />
      <Taskbar />
    </div>
  );
}
